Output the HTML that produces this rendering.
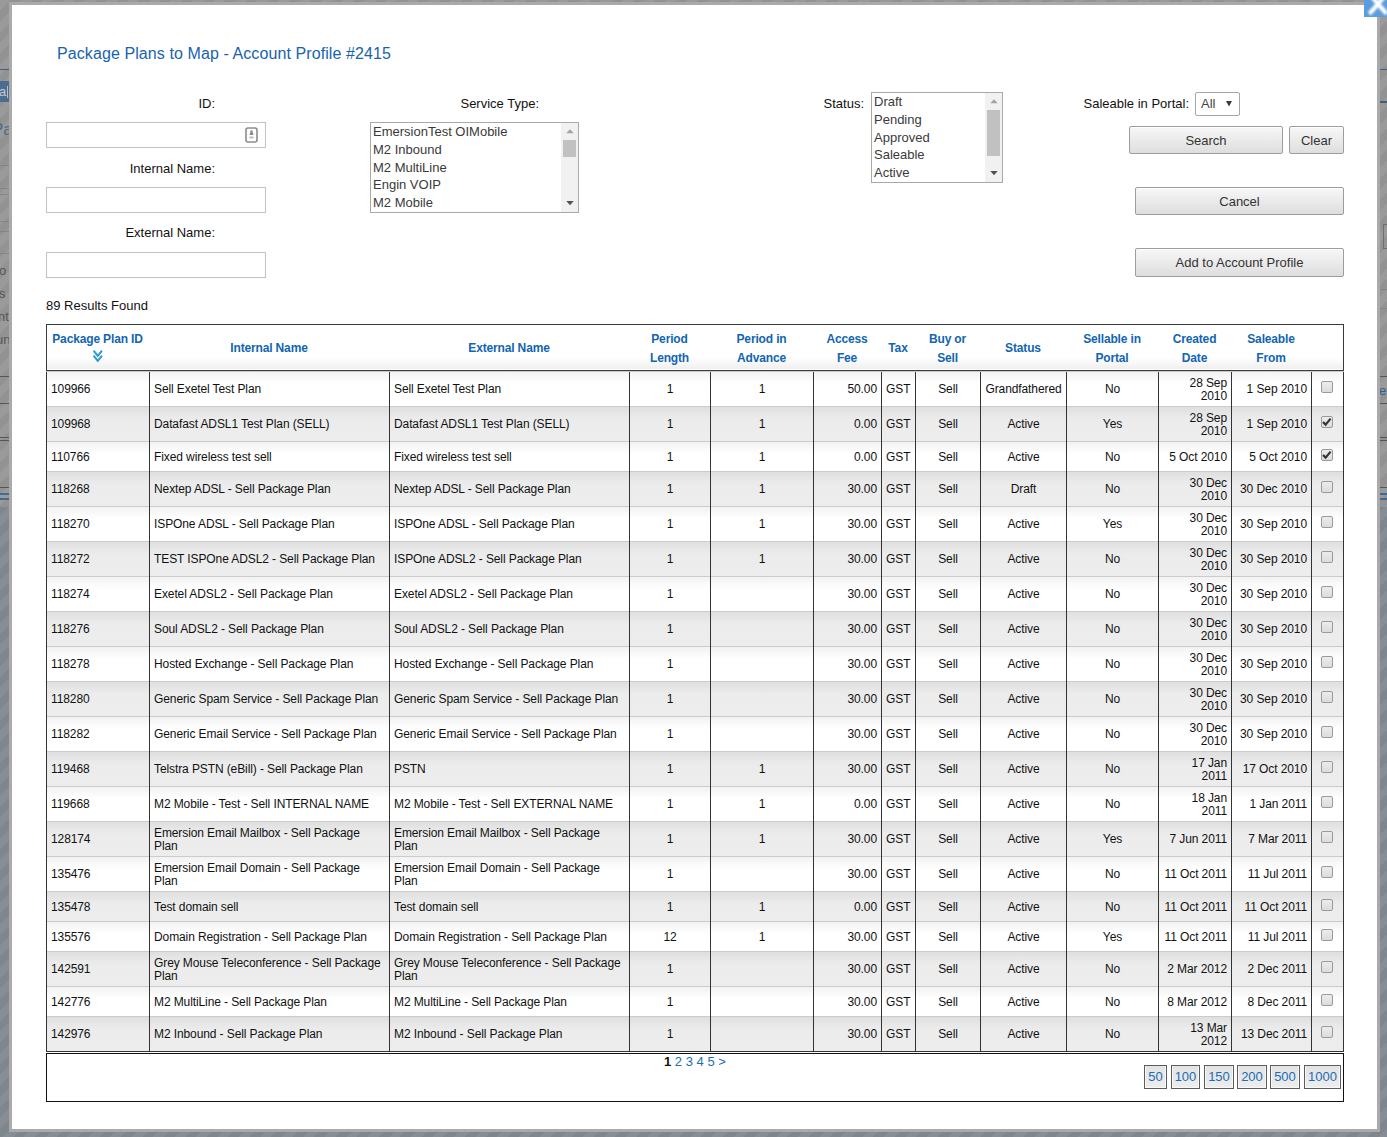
<!DOCTYPE html><html><head><meta charset="utf-8"><title>Package Plans to Map</title><style>
html,body{margin:0;padding:0;}
body{width:1387px;height:1137px;overflow:hidden;position:relative;font-family:"Liberation Sans",sans-serif;
 background:#979797;}
.bg{position:absolute;left:0;top:0;width:1387px;height:1137px;
 background:repeating-linear-gradient(135deg,rgba(255,255,255,0.03) 0 7.6px,rgba(0,0,0,0.03) 7.6px 15.2px);}
.bgb{position:absolute;left:0;top:507px;width:1387px;height:630px;background:#838a92;}
.ln{position:absolute;height:1px;}
.modal{position:absolute;left:9px;top:2px;width:1371px;height:1130px;box-sizing:border-box;border:3px solid #aaaaaa;background:#fff;}
.close{position:absolute;left:1364px;top:0;width:23px;height:17px;background:#5a9cdc;overflow:hidden;}
.abs{position:absolute;white-space:nowrap;}
.title{position:absolute;left:57px;top:45px;letter-spacing:0.09px;font-size:16px;line-height:18px;color:#1763ae;white-space:nowrap;}
.lbl{position:absolute;font-size:13px;line-height:15px;color:#111;white-space:nowrap;text-align:right;}
.inp{position:absolute;box-sizing:border-box;border:1px solid #c2c2c2;background:#fff;}
.lb{position:absolute;box-sizing:border-box;border:1px solid #a9a9a9;background:#fff;overflow:hidden;}
.lb .opts{position:absolute;left:2px;font-size:13px;line-height:17.75px;color:#3a3a3a;white-space:nowrap;}
.sb{position:absolute;right:0;top:0;bottom:0;width:17px;background:#f1f1f1;}
.sb .th{position:absolute;left:2px;width:13px;background:#c1c1c1;}
.btn{position:absolute;box-sizing:border-box;border:1px solid #9d9d9d;border-radius:2px;
 background:linear-gradient(#f7f7f7,#dedede);box-shadow:inset 0 1px 0 #fff;font-size:13px;color:#333;
 text-align:center;white-space:nowrap;}
.sel{position:absolute;box-sizing:border-box;border:1px solid #a6a6a6;border-radius:2px;background:#fff;font-size:13px;color:#333;}
.thead{position:absolute;left:46px;top:324px;width:1298px;height:47px;box-sizing:border-box;border:1px solid #3a3a3a;
 background:linear-gradient(#fff 0,#fff 72%,#eeeeee 100%);box-shadow:inset 0 -1px 0 #fff;}
.th{position:absolute;top:325px;height:45px;font-size:12px;font-weight:bold;color:#1265b2;letter-spacing:-0.15px;text-align:center;white-space:nowrap;}
.th1{line-height:47px;}
.th2{line-height:19px;padding-top:5px;box-sizing:border-box;}
.sorticon{display:inline-block;vertical-align:top;margin-top:1px;}
.row{position:absolute;left:46px;width:1298px;box-sizing:border-box;border-top:1px solid #cbcbcb;}
.row.odd{background:linear-gradient(#f2f2f2 0,#fdfdfd 10px,#fff 13px,#fff 100%);}
.row.even{background:linear-gradient(#dfdfdf 0,#e9e9e9 9px,#ececec 13px,#ededed 100%);}
.td{position:absolute;top:0;bottom:0;display:flex;align-items:center;box-sizing:border-box;font-size:12px;line-height:13px;color:#111;white-space:nowrap;letter-spacing:-0.1px;}
.td.l{justify-content:flex-start;padding-left:5px;}
.td.c{justify-content:center;padding-left:1px;}
.td.r{justify-content:flex-end;padding-right:4px;text-align:right;}
.td span.w{position:relative;top:1px;}
.cb{display:inline-block;width:12px;height:12px;box-sizing:border-box;border:1px solid #9a9a9a;border-radius:2px;background:linear-gradient(#ececec,#dcdcdc);position:relative;left:-1px;top:-2px;}
.cb svg{position:absolute;left:0px;top:0px;}
.vl{position:absolute;top:372px;height:680px;width:1px;background:#333;}
.tbot{position:absolute;left:46px;top:1051px;width:1298px;height:1px;background:#333;}
.pager{position:absolute;left:46px;top:1053px;width:1298px;height:49px;box-sizing:border-box;border:1px solid #111;}
.pg{position:absolute;font-size:13px;line-height:15px;white-space:nowrap;color:#1b6db3;}
.pb{position:absolute;top:1065px;height:24px;box-sizing:border-box;border:1px solid #5c5c5c;background:linear-gradient(#e3e3e3,#ededed);box-shadow:inset 1px -1px 0 #f8f8f8,inset -1px 0 0 #f8f8f8;
 font-size:13px;line-height:22px;color:#1b6db3;text-align:center;}

</style></head><body>
<div class="bgb"></div>
<div class="bg"></div>
<!-- background page hints -->
<div class="ln" style="left:0;top:69px;width:9px;background:#3d5f86"></div>
<div class="abs" style="left:0;top:81px;width:9px;height:21px;background:#4b6b8f;overflow:hidden"><span style="position:absolute;left:-1px;top:3px;font-size:13px;line-height:15px;color:#c4cdd8">a</span><span style="position:absolute;left:7px;top:5px;width:1px;height:12px;background:#b4c0cc"></span></div>
<div class="abs" style="left:0;top:112px;width:9px;height:24px;overflow:hidden"><span style="position:absolute;left:-8px;top:8px;font-size:17px;line-height:19px;color:#4c6a8a">Pa</span></div>
<div class="ln" style="left:0;top:165px;width:9px;background:#858585"></div>
<div class="ln" style="left:0;top:188px;width:9px;background:#858585"></div>
<div class="ln" style="left:0;top:194px;width:9px;background:#858585"></div>
<div class="ln" style="left:0;top:221px;width:9px;background:#858585"></div>
<div class="ln" style="left:0;top:231px;width:9px;background:#858585"></div>
<div class="ln" style="left:0;top:253px;width:9px;background:#858585"></div>
<div class="abs" style="left:0;top:259px;width:9px;height:95px;overflow:hidden;font-size:13px;line-height:23px;color:#555"><div style="position:absolute;left:-1px;top:0">o</div><div style="position:absolute;left:-1px;top:23px">s</div><div style="position:absolute;left:-2px;top:46px">nt</div><div style="position:absolute;left:-4px;top:69px">un</div></div>
<div class="ln" style="left:0;top:376px;width:9px;background:#555"></div>
<div class="ln" style="left:0;top:403px;width:9px;background:#555"></div>
<div class="ln" style="left:0;top:437px;width:9px;background:#555"></div>
<div class="ln" style="left:0;top:440px;width:9px;background:#555"></div>
<div class="ln" style="left:0;top:487px;width:9px;background:#555"></div>
<div class="ln" style="left:0;top:493px;width:9px;height:2px;background:#3f6a96"></div>
<div class="ln" style="left:0;top:498px;width:9px;height:2px;background:#3f6a96"></div>

<div class="ln" style="left:1380px;top:69px;width:7px;background:#3d5f86"></div>
<div class="ln" style="left:1380px;top:101px;width:7px;height:2px;background:#3d5f86"></div>
<div class="abs" style="left:1383px;top:224px;width:8px;height:25px;box-sizing:border-box;border:1px solid #6e6e6e;"></div>
<div class="ln" style="left:1380px;top:289px;width:7px;background:#858585"></div>
<div class="ln" style="left:1380px;top:308px;width:7px;background:#858585"></div>
<div class="ln" style="left:1380px;top:376px;width:7px;background:#555"></div>
<div class="abs" style="left:1380px;top:383px;width:7px;height:16px;overflow:hidden"><span style="position:absolute;left:-1px;top:0;font-size:13px;color:#2f5f92">e</span></div>
<div class="ln" style="left:1380px;top:403px;width:7px;background:#555"></div>
<div class="ln" style="left:1380px;top:437px;width:7px;background:#555"></div>
<div class="ln" style="left:1380px;top:440px;width:7px;background:#555"></div>
<div class="ln" style="left:1380px;top:487px;width:7px;background:#555"></div>
<div class="ln" style="left:1380px;top:493px;width:7px;height:2px;background:#3f6a96"></div>
<div class="ln" style="left:1380px;top:498px;width:7px;height:2px;background:#3f6a96"></div>

<div class="modal"></div>
<div class="close"><svg width="23" height="17" viewBox="0 0 23 17"><defs><filter id="xb" x="-50%" y="-50%" width="200%" height="200%"><feGaussianBlur stdDeviation="1.1"/></filter></defs><path d="M4 -8 L14 4 L24 -8 M14 4 L6.5 12.5 M14 4 L21.5 12.5" fill="none" stroke="#fff" stroke-width="4.2" stroke-linecap="round" filter="url(#xb)"/></svg></div>

<div class="title">Package Plans to Map - Account Profile #2415</div>

<div class="lbl" style="right:1172px;top:96px">ID:</div>
<div class="inp" style="left:46px;top:122px;width:220px;height:26px"><svg style="position:absolute;left:198px;top:4px" width="13" height="16" viewBox="0 0 13 16"><rect x="1" y="1" width="11" height="14" rx="2" ry="2" fill="#fff" stroke="#8c8c8c" stroke-width="1.6"/><circle cx="6.5" cy="4.3" r="1.1" fill="#888"/><path d="M5.6 4.5 L7.4 4.5 L8.6 8 L4.4 8 Z" fill="#8a8a8a"/><rect x="4.2" y="9.4" width="4.6" height="2" rx="0.8" fill="#bdbdbd"/></svg></div>
<div class="lbl" style="right:1172px;top:161px">Internal Name:</div>
<div class="inp" style="left:46px;top:187px;width:220px;height:26px"></div>
<div class="lbl" style="right:1172px;top:225px">External Name:</div>
<div class="inp" style="left:46px;top:252px;width:220px;height:26px"></div>

<div class="lbl" style="right:848px;top:96px">Service Type:</div>
<div class="lb" style="left:370px;top:122px;width:209px;height:91px">
 <div class="opts" style="top:0px">EmersionTest OIMobile<br>M2 Inbound<br>M2 MultiLine<br>Engin VOIP<br>M2 Mobile</div>
 <div class="sb"><svg style="position:absolute;left:4.5px;top:6px" width="8" height="5"><path d="M0.3 4.2 L4 0.3 L7.7 4.2Z" fill="#a3a3a3"/></svg><div class="th" style="top:17px;height:17px"></div><svg style="position:absolute;left:4.5px;top:78px" width="8" height="5"><path d="M0.3 0 L4 4.2 L7.7 0Z" fill="#505050"/></svg></div>
</div>

<div class="lbl" style="right:523px;top:96px">Status:</div>
<div class="lb" style="left:871px;top:92px;width:132px;height:91px">
 <div class="opts" style="top:0px">Draft<br>Pending<br>Approved<br>Saleable<br>Active</div>
 <div class="sb"><svg style="position:absolute;left:4.5px;top:6px" width="8" height="5"><path d="M0.3 4.2 L4 0.3 L7.7 4.2Z" fill="#a3a3a3"/></svg><div class="th" style="top:17px;height:46px"></div><svg style="position:absolute;left:4.5px;top:78px" width="8" height="5"><path d="M0.3 0 L4 4.2 L7.7 0Z" fill="#505050"/></svg></div>
</div>

<div class="lbl" style="right:198px;top:96px">Saleable in Portal:</div>
<div class="sel" style="left:1195px;top:92px;width:45px;height:24px"><span style="position:absolute;left:5px;top:3px;line-height:15px;color:#444">All</span><svg style="position:absolute;left:30px;top:8px" width="6" height="6"><path d="M0 0 L6 0 L3 5.6Z" fill="#3a3a3a"/></svg></div>

<div class="btn" style="left:1129px;top:126px;width:154px;height:28px;line-height:26px;padding-top:1px">Search</div>
<div class="btn" style="left:1289px;top:126px;width:55px;height:28px;line-height:26px;padding-top:1px">Clear</div>
<div class="btn" style="left:1135px;top:187px;width:209px;height:28px;line-height:26px;padding-top:1px">Cancel</div>
<div class="btn" style="left:1135px;top:248px;width:209px;height:29px;line-height:27px">Add to Account Profile</div>

<div class="lbl" style="left:46px;top:298px;text-align:left">89 Results Found</div>

<div class="thead"></div>
<div class="th th2" style="left:46px;width:103px">Package Plan ID<br><svg class="sorticon" width="10" height="13" viewBox="0 0 10 13"><defs><linearGradient id="sg" x1="0" y1="0" x2="0" y2="1"><stop offset="0" stop-color="#3cc4ee"/><stop offset="1" stop-color="#0b7fbf"/></linearGradient></defs><path d="M1.2 1.3 L4.8 5.8 L8.4 1.3 M1.2 6.3 L4.8 10.8 L8.4 6.3" fill="none" stroke="#0f86c4" stroke-width="1.9" stroke-linejoin="miter" stroke-linecap="round"/><path d="M1.6 1.6 L4.8 5.5 L8 1.6 M1.6 6.6 L4.8 10.5 L8 6.6" fill="none" stroke="#5ad0f2" stroke-width="0.6" stroke-linecap="round"/></svg></div>
<div class="th th1" style="left:149px;width:240px">Internal Name</div>
<div class="th th1" style="left:389px;width:240px">External Name</div>
<div class="th th2" style="left:629px;width:81px">Period<br>Length</div>
<div class="th th2" style="left:710px;width:103px">Period in<br>Advance</div>
<div class="th th2" style="left:813px;width:68px">Access<br>Fee</div>
<div class="th th1" style="left:881px;width:34px">Tax</div>
<div class="th th2" style="left:915px;width:65px">Buy or<br>Sell</div>
<div class="th th1" style="left:980px;width:86px">Status</div>
<div class="th th2" style="left:1066px;width:92px">Sellable in<br>Portal</div>
<div class="th th2" style="left:1158px;width:73px">Created<br>Date</div>
<div class="th th2" style="left:1231px;width:80px">Saleable<br>From</div>
<div class="row odd" style="top:371px;height:35px">
<div class="td l" style="left:0px;width:103px"><span>109966</span></div>
<div class="td l" style="left:103px;width:240px"><span>Sell Exetel Test Plan</span></div>
<div class="td l" style="left:343px;width:240px"><span>Sell Exetel Test Plan</span></div>
<div class="td c" style="left:583px;width:81px"><span>1</span></div>
<div class="td c" style="left:664px;width:103px"><span>1</span></div>
<div class="td r" style="left:767px;width:68px"><span>50.00</span></div>
<div class="td l" style="left:835px;width:34px"><span>GST</span></div>
<div class="td c" style="left:869px;width:65px"><span>Sell</span></div>
<div class="td c" style="left:934px;width:86px"><span>Grandfathered</span></div>
<div class="td c" style="left:1020px;width:92px"><span>No</span></div>
<div class="td r" style="left:1112px;width:73px"><span class="w">28 Sep<br>2010</span></div>
<div class="td r" style="left:1185px;width:80px"><span>1 Sep 2010</span></div>
<div class="td c" style="left:1265px;width:32px"><span class="cb"></span></div>
</div>
<div class="row even" style="top:406px;height:35px">
<div class="td l" style="left:0px;width:103px"><span>109968</span></div>
<div class="td l" style="left:103px;width:240px"><span>Datafast ADSL1 Test Plan (SELL)</span></div>
<div class="td l" style="left:343px;width:240px"><span>Datafast ADSL1 Test Plan (SELL)</span></div>
<div class="td c" style="left:583px;width:81px"><span>1</span></div>
<div class="td c" style="left:664px;width:103px"><span>1</span></div>
<div class="td r" style="left:767px;width:68px"><span>0.00</span></div>
<div class="td l" style="left:835px;width:34px"><span>GST</span></div>
<div class="td c" style="left:869px;width:65px"><span>Sell</span></div>
<div class="td c" style="left:934px;width:86px"><span>Active</span></div>
<div class="td c" style="left:1020px;width:92px"><span>Yes</span></div>
<div class="td r" style="left:1112px;width:73px"><span class="w">28 Sep<br>2010</span></div>
<div class="td r" style="left:1185px;width:80px"><span>1 Sep 2010</span></div>
<div class="td c" style="left:1265px;width:32px"><span class="cb"><svg width="10" height="10" viewBox="0 0 10 10"><path d="M1 5 L3.6 7.6 L8.6 1.6" fill="none" stroke="#333" stroke-width="2.2"/></svg></span></div>
</div>
<div class="row odd" style="top:441px;height:30px">
<div class="td l" style="left:0px;width:103px"><span class="w">110766</span></div>
<div class="td l" style="left:103px;width:240px"><span class="w">Fixed wireless test sell</span></div>
<div class="td l" style="left:343px;width:240px"><span class="w">Fixed wireless test sell</span></div>
<div class="td c" style="left:583px;width:81px"><span class="w">1</span></div>
<div class="td c" style="left:664px;width:103px"><span class="w">1</span></div>
<div class="td r" style="left:767px;width:68px"><span class="w">0.00</span></div>
<div class="td l" style="left:835px;width:34px"><span class="w">GST</span></div>
<div class="td c" style="left:869px;width:65px"><span class="w">Sell</span></div>
<div class="td c" style="left:934px;width:86px"><span class="w">Active</span></div>
<div class="td c" style="left:1020px;width:92px"><span class="w">No</span></div>
<div class="td r" style="left:1112px;width:73px"><span class="w">5 Oct 2010</span></div>
<div class="td r" style="left:1185px;width:80px"><span class="w">5 Oct 2010</span></div>
<div class="td c" style="left:1265px;width:32px"><span class="cb"><svg width="10" height="10" viewBox="0 0 10 10"><path d="M1 5 L3.6 7.6 L8.6 1.6" fill="none" stroke="#333" stroke-width="2.2"/></svg></span></div>
</div>
<div class="row even" style="top:471px;height:35px">
<div class="td l" style="left:0px;width:103px"><span>118268</span></div>
<div class="td l" style="left:103px;width:240px"><span>Nextep ADSL - Sell Package Plan</span></div>
<div class="td l" style="left:343px;width:240px"><span>Nextep ADSL - Sell Package Plan</span></div>
<div class="td c" style="left:583px;width:81px"><span>1</span></div>
<div class="td c" style="left:664px;width:103px"><span>1</span></div>
<div class="td r" style="left:767px;width:68px"><span>30.00</span></div>
<div class="td l" style="left:835px;width:34px"><span>GST</span></div>
<div class="td c" style="left:869px;width:65px"><span>Sell</span></div>
<div class="td c" style="left:934px;width:86px"><span>Draft</span></div>
<div class="td c" style="left:1020px;width:92px"><span>No</span></div>
<div class="td r" style="left:1112px;width:73px"><span class="w">30 Dec<br>2010</span></div>
<div class="td r" style="left:1185px;width:80px"><span>30 Dec 2010</span></div>
<div class="td c" style="left:1265px;width:32px"><span class="cb"></span></div>
</div>
<div class="row odd" style="top:506px;height:35px">
<div class="td l" style="left:0px;width:103px"><span>118270</span></div>
<div class="td l" style="left:103px;width:240px"><span>ISPOne ADSL - Sell Package Plan</span></div>
<div class="td l" style="left:343px;width:240px"><span>ISPOne ADSL - Sell Package Plan</span></div>
<div class="td c" style="left:583px;width:81px"><span>1</span></div>
<div class="td c" style="left:664px;width:103px"><span>1</span></div>
<div class="td r" style="left:767px;width:68px"><span>30.00</span></div>
<div class="td l" style="left:835px;width:34px"><span>GST</span></div>
<div class="td c" style="left:869px;width:65px"><span>Sell</span></div>
<div class="td c" style="left:934px;width:86px"><span>Active</span></div>
<div class="td c" style="left:1020px;width:92px"><span>Yes</span></div>
<div class="td r" style="left:1112px;width:73px"><span class="w">30 Dec<br>2010</span></div>
<div class="td r" style="left:1185px;width:80px"><span>30 Sep 2010</span></div>
<div class="td c" style="left:1265px;width:32px"><span class="cb"></span></div>
</div>
<div class="row even" style="top:541px;height:35px">
<div class="td l" style="left:0px;width:103px"><span>118272</span></div>
<div class="td l" style="left:103px;width:240px"><span>TEST ISPOne ADSL2 - Sell Package Plan</span></div>
<div class="td l" style="left:343px;width:240px"><span>ISPOne ADSL2 - Sell Package Plan</span></div>
<div class="td c" style="left:583px;width:81px"><span>1</span></div>
<div class="td c" style="left:664px;width:103px"><span>1</span></div>
<div class="td r" style="left:767px;width:68px"><span>30.00</span></div>
<div class="td l" style="left:835px;width:34px"><span>GST</span></div>
<div class="td c" style="left:869px;width:65px"><span>Sell</span></div>
<div class="td c" style="left:934px;width:86px"><span>Active</span></div>
<div class="td c" style="left:1020px;width:92px"><span>No</span></div>
<div class="td r" style="left:1112px;width:73px"><span class="w">30 Dec<br>2010</span></div>
<div class="td r" style="left:1185px;width:80px"><span>30 Sep 2010</span></div>
<div class="td c" style="left:1265px;width:32px"><span class="cb"></span></div>
</div>
<div class="row odd" style="top:576px;height:35px">
<div class="td l" style="left:0px;width:103px"><span>118274</span></div>
<div class="td l" style="left:103px;width:240px"><span>Exetel ADSL2 - Sell Package Plan</span></div>
<div class="td l" style="left:343px;width:240px"><span>Exetel ADSL2 - Sell Package Plan</span></div>
<div class="td c" style="left:583px;width:81px"><span>1</span></div>
<div class="td r" style="left:767px;width:68px"><span>30.00</span></div>
<div class="td l" style="left:835px;width:34px"><span>GST</span></div>
<div class="td c" style="left:869px;width:65px"><span>Sell</span></div>
<div class="td c" style="left:934px;width:86px"><span>Active</span></div>
<div class="td c" style="left:1020px;width:92px"><span>No</span></div>
<div class="td r" style="left:1112px;width:73px"><span class="w">30 Dec<br>2010</span></div>
<div class="td r" style="left:1185px;width:80px"><span>30 Sep 2010</span></div>
<div class="td c" style="left:1265px;width:32px"><span class="cb"></span></div>
</div>
<div class="row even" style="top:611px;height:35px">
<div class="td l" style="left:0px;width:103px"><span>118276</span></div>
<div class="td l" style="left:103px;width:240px"><span>Soul ADSL2 - Sell Package Plan</span></div>
<div class="td l" style="left:343px;width:240px"><span>Soul ADSL2 - Sell Package Plan</span></div>
<div class="td c" style="left:583px;width:81px"><span>1</span></div>
<div class="td r" style="left:767px;width:68px"><span>30.00</span></div>
<div class="td l" style="left:835px;width:34px"><span>GST</span></div>
<div class="td c" style="left:869px;width:65px"><span>Sell</span></div>
<div class="td c" style="left:934px;width:86px"><span>Active</span></div>
<div class="td c" style="left:1020px;width:92px"><span>No</span></div>
<div class="td r" style="left:1112px;width:73px"><span class="w">30 Dec<br>2010</span></div>
<div class="td r" style="left:1185px;width:80px"><span>30 Sep 2010</span></div>
<div class="td c" style="left:1265px;width:32px"><span class="cb"></span></div>
</div>
<div class="row odd" style="top:646px;height:35px">
<div class="td l" style="left:0px;width:103px"><span>118278</span></div>
<div class="td l" style="left:103px;width:240px"><span>Hosted Exchange - Sell Package Plan</span></div>
<div class="td l" style="left:343px;width:240px"><span>Hosted Exchange - Sell Package Plan</span></div>
<div class="td c" style="left:583px;width:81px"><span>1</span></div>
<div class="td r" style="left:767px;width:68px"><span>30.00</span></div>
<div class="td l" style="left:835px;width:34px"><span>GST</span></div>
<div class="td c" style="left:869px;width:65px"><span>Sell</span></div>
<div class="td c" style="left:934px;width:86px"><span>Active</span></div>
<div class="td c" style="left:1020px;width:92px"><span>No</span></div>
<div class="td r" style="left:1112px;width:73px"><span class="w">30 Dec<br>2010</span></div>
<div class="td r" style="left:1185px;width:80px"><span>30 Sep 2010</span></div>
<div class="td c" style="left:1265px;width:32px"><span class="cb"></span></div>
</div>
<div class="row even" style="top:681px;height:35px">
<div class="td l" style="left:0px;width:103px"><span>118280</span></div>
<div class="td l" style="left:103px;width:240px"><span>Generic Spam Service - Sell Package Plan</span></div>
<div class="td l" style="left:343px;width:240px"><span>Generic Spam Service - Sell Package Plan</span></div>
<div class="td c" style="left:583px;width:81px"><span>1</span></div>
<div class="td r" style="left:767px;width:68px"><span>30.00</span></div>
<div class="td l" style="left:835px;width:34px"><span>GST</span></div>
<div class="td c" style="left:869px;width:65px"><span>Sell</span></div>
<div class="td c" style="left:934px;width:86px"><span>Active</span></div>
<div class="td c" style="left:1020px;width:92px"><span>No</span></div>
<div class="td r" style="left:1112px;width:73px"><span class="w">30 Dec<br>2010</span></div>
<div class="td r" style="left:1185px;width:80px"><span>30 Sep 2010</span></div>
<div class="td c" style="left:1265px;width:32px"><span class="cb"></span></div>
</div>
<div class="row odd" style="top:716px;height:35px">
<div class="td l" style="left:0px;width:103px"><span>118282</span></div>
<div class="td l" style="left:103px;width:240px"><span>Generic Email Service - Sell Package Plan</span></div>
<div class="td l" style="left:343px;width:240px"><span>Generic Email Service - Sell Package Plan</span></div>
<div class="td c" style="left:583px;width:81px"><span>1</span></div>
<div class="td r" style="left:767px;width:68px"><span>30.00</span></div>
<div class="td l" style="left:835px;width:34px"><span>GST</span></div>
<div class="td c" style="left:869px;width:65px"><span>Sell</span></div>
<div class="td c" style="left:934px;width:86px"><span>Active</span></div>
<div class="td c" style="left:1020px;width:92px"><span>No</span></div>
<div class="td r" style="left:1112px;width:73px"><span class="w">30 Dec<br>2010</span></div>
<div class="td r" style="left:1185px;width:80px"><span>30 Sep 2010</span></div>
<div class="td c" style="left:1265px;width:32px"><span class="cb"></span></div>
</div>
<div class="row even" style="top:751px;height:35px">
<div class="td l" style="left:0px;width:103px"><span>119468</span></div>
<div class="td l" style="left:103px;width:240px"><span>Telstra PSTN (eBill) - Sell Package Plan</span></div>
<div class="td l" style="left:343px;width:240px"><span>PSTN</span></div>
<div class="td c" style="left:583px;width:81px"><span>1</span></div>
<div class="td c" style="left:664px;width:103px"><span>1</span></div>
<div class="td r" style="left:767px;width:68px"><span>30.00</span></div>
<div class="td l" style="left:835px;width:34px"><span>GST</span></div>
<div class="td c" style="left:869px;width:65px"><span>Sell</span></div>
<div class="td c" style="left:934px;width:86px"><span>Active</span></div>
<div class="td c" style="left:1020px;width:92px"><span>No</span></div>
<div class="td r" style="left:1112px;width:73px"><span class="w">17 Jan<br>2011</span></div>
<div class="td r" style="left:1185px;width:80px"><span>17 Oct 2010</span></div>
<div class="td c" style="left:1265px;width:32px"><span class="cb"></span></div>
</div>
<div class="row odd" style="top:786px;height:35px">
<div class="td l" style="left:0px;width:103px"><span>119668</span></div>
<div class="td l" style="left:103px;width:240px"><span>M2 Mobile - Test - Sell INTERNAL NAME</span></div>
<div class="td l" style="left:343px;width:240px"><span>M2 Mobile - Test - Sell EXTERNAL NAME</span></div>
<div class="td c" style="left:583px;width:81px"><span>1</span></div>
<div class="td c" style="left:664px;width:103px"><span>1</span></div>
<div class="td r" style="left:767px;width:68px"><span>0.00</span></div>
<div class="td l" style="left:835px;width:34px"><span>GST</span></div>
<div class="td c" style="left:869px;width:65px"><span>Sell</span></div>
<div class="td c" style="left:934px;width:86px"><span>Active</span></div>
<div class="td c" style="left:1020px;width:92px"><span>No</span></div>
<div class="td r" style="left:1112px;width:73px"><span class="w">18 Jan<br>2011</span></div>
<div class="td r" style="left:1185px;width:80px"><span>1 Jan 2011</span></div>
<div class="td c" style="left:1265px;width:32px"><span class="cb"></span></div>
</div>
<div class="row even" style="top:821px;height:35px">
<div class="td l" style="left:0px;width:103px"><span>128174</span></div>
<div class="td l" style="left:103px;width:240px"><span class="w">Emersion Email Mailbox - Sell Package<br>Plan</span></div>
<div class="td l" style="left:343px;width:240px"><span class="w">Emersion Email Mailbox - Sell Package<br>Plan</span></div>
<div class="td c" style="left:583px;width:81px"><span>1</span></div>
<div class="td c" style="left:664px;width:103px"><span>1</span></div>
<div class="td r" style="left:767px;width:68px"><span>30.00</span></div>
<div class="td l" style="left:835px;width:34px"><span>GST</span></div>
<div class="td c" style="left:869px;width:65px"><span>Sell</span></div>
<div class="td c" style="left:934px;width:86px"><span>Active</span></div>
<div class="td c" style="left:1020px;width:92px"><span>Yes</span></div>
<div class="td r" style="left:1112px;width:73px"><span>7 Jun 2011</span></div>
<div class="td r" style="left:1185px;width:80px"><span>7 Mar 2011</span></div>
<div class="td c" style="left:1265px;width:32px"><span class="cb"></span></div>
</div>
<div class="row odd" style="top:856px;height:35px">
<div class="td l" style="left:0px;width:103px"><span>135476</span></div>
<div class="td l" style="left:103px;width:240px"><span class="w">Emersion Email Domain - Sell Package<br>Plan</span></div>
<div class="td l" style="left:343px;width:240px"><span class="w">Emersion Email Domain - Sell Package<br>Plan</span></div>
<div class="td c" style="left:583px;width:81px"><span>1</span></div>
<div class="td r" style="left:767px;width:68px"><span>30.00</span></div>
<div class="td l" style="left:835px;width:34px"><span>GST</span></div>
<div class="td c" style="left:869px;width:65px"><span>Sell</span></div>
<div class="td c" style="left:934px;width:86px"><span>Active</span></div>
<div class="td c" style="left:1020px;width:92px"><span>No</span></div>
<div class="td r" style="left:1112px;width:73px"><span>11 Oct 2011</span></div>
<div class="td r" style="left:1185px;width:80px"><span>11 Jul 2011</span></div>
<div class="td c" style="left:1265px;width:32px"><span class="cb"></span></div>
</div>
<div class="row even" style="top:891px;height:30px">
<div class="td l" style="left:0px;width:103px"><span class="w">135478</span></div>
<div class="td l" style="left:103px;width:240px"><span class="w">Test domain sell</span></div>
<div class="td l" style="left:343px;width:240px"><span class="w">Test domain sell</span></div>
<div class="td c" style="left:583px;width:81px"><span class="w">1</span></div>
<div class="td c" style="left:664px;width:103px"><span class="w">1</span></div>
<div class="td r" style="left:767px;width:68px"><span class="w">0.00</span></div>
<div class="td l" style="left:835px;width:34px"><span class="w">GST</span></div>
<div class="td c" style="left:869px;width:65px"><span class="w">Sell</span></div>
<div class="td c" style="left:934px;width:86px"><span class="w">Active</span></div>
<div class="td c" style="left:1020px;width:92px"><span class="w">No</span></div>
<div class="td r" style="left:1112px;width:73px"><span class="w">11 Oct 2011</span></div>
<div class="td r" style="left:1185px;width:80px"><span class="w">11 Oct 2011</span></div>
<div class="td c" style="left:1265px;width:32px"><span class="cb"></span></div>
</div>
<div class="row odd" style="top:921px;height:30px">
<div class="td l" style="left:0px;width:103px"><span class="w">135576</span></div>
<div class="td l" style="left:103px;width:240px"><span class="w">Domain Registration - Sell Package Plan</span></div>
<div class="td l" style="left:343px;width:240px"><span class="w">Domain Registration - Sell Package Plan</span></div>
<div class="td c" style="left:583px;width:81px"><span class="w">12</span></div>
<div class="td c" style="left:664px;width:103px"><span class="w">1</span></div>
<div class="td r" style="left:767px;width:68px"><span class="w">30.00</span></div>
<div class="td l" style="left:835px;width:34px"><span class="w">GST</span></div>
<div class="td c" style="left:869px;width:65px"><span class="w">Sell</span></div>
<div class="td c" style="left:934px;width:86px"><span class="w">Active</span></div>
<div class="td c" style="left:1020px;width:92px"><span class="w">Yes</span></div>
<div class="td r" style="left:1112px;width:73px"><span class="w">11 Oct 2011</span></div>
<div class="td r" style="left:1185px;width:80px"><span class="w">11 Jul 2011</span></div>
<div class="td c" style="left:1265px;width:32px"><span class="cb"></span></div>
</div>
<div class="row even" style="top:951px;height:35px">
<div class="td l" style="left:0px;width:103px"><span>142591</span></div>
<div class="td l" style="left:103px;width:240px"><span class="w">Grey Mouse Teleconference - Sell Package<br>Plan</span></div>
<div class="td l" style="left:343px;width:240px"><span class="w">Grey Mouse Teleconference - Sell Package<br>Plan</span></div>
<div class="td c" style="left:583px;width:81px"><span>1</span></div>
<div class="td r" style="left:767px;width:68px"><span>30.00</span></div>
<div class="td l" style="left:835px;width:34px"><span>GST</span></div>
<div class="td c" style="left:869px;width:65px"><span>Sell</span></div>
<div class="td c" style="left:934px;width:86px"><span>Active</span></div>
<div class="td c" style="left:1020px;width:92px"><span>No</span></div>
<div class="td r" style="left:1112px;width:73px"><span>2 Mar 2012</span></div>
<div class="td r" style="left:1185px;width:80px"><span>2 Dec 2011</span></div>
<div class="td c" style="left:1265px;width:32px"><span class="cb"></span></div>
</div>
<div class="row odd" style="top:986px;height:30px">
<div class="td l" style="left:0px;width:103px"><span class="w">142776</span></div>
<div class="td l" style="left:103px;width:240px"><span class="w">M2 MultiLine - Sell Package Plan</span></div>
<div class="td l" style="left:343px;width:240px"><span class="w">M2 MultiLine - Sell Package Plan</span></div>
<div class="td c" style="left:583px;width:81px"><span class="w">1</span></div>
<div class="td r" style="left:767px;width:68px"><span class="w">30.00</span></div>
<div class="td l" style="left:835px;width:34px"><span class="w">GST</span></div>
<div class="td c" style="left:869px;width:65px"><span class="w">Sell</span></div>
<div class="td c" style="left:934px;width:86px"><span class="w">Active</span></div>
<div class="td c" style="left:1020px;width:92px"><span class="w">No</span></div>
<div class="td r" style="left:1112px;width:73px"><span class="w">8 Mar 2012</span></div>
<div class="td r" style="left:1185px;width:80px"><span class="w">8 Dec 2011</span></div>
<div class="td c" style="left:1265px;width:32px"><span class="cb"></span></div>
</div>
<div class="row even" style="top:1016px;height:35px">
<div class="td l" style="left:0px;width:103px"><span>142976</span></div>
<div class="td l" style="left:103px;width:240px"><span>M2 Inbound - Sell Package Plan</span></div>
<div class="td l" style="left:343px;width:240px"><span>M2 Inbound - Sell Package Plan</span></div>
<div class="td c" style="left:583px;width:81px"><span>1</span></div>
<div class="td r" style="left:767px;width:68px"><span>30.00</span></div>
<div class="td l" style="left:835px;width:34px"><span>GST</span></div>
<div class="td c" style="left:869px;width:65px"><span>Sell</span></div>
<div class="td c" style="left:934px;width:86px"><span>Active</span></div>
<div class="td c" style="left:1020px;width:92px"><span>No</span></div>
<div class="td r" style="left:1112px;width:73px"><span class="w">13 Mar<br>2012</span></div>
<div class="td r" style="left:1185px;width:80px"><span>13 Dec 2011</span></div>
<div class="td c" style="left:1265px;width:32px"><span class="cb"></span></div>
</div>
<div class="vl" style="left:46px"></div>
<div class="vl" style="left:149px"></div>
<div class="vl" style="left:389px"></div>
<div class="vl" style="left:629px"></div>
<div class="vl" style="left:710px"></div>
<div class="vl" style="left:813px"></div>
<div class="vl" style="left:881px"></div>
<div class="vl" style="left:915px"></div>
<div class="vl" style="left:980px"></div>
<div class="vl" style="left:1066px"></div>
<div class="vl" style="left:1158px"></div>
<div class="vl" style="left:1231px"></div>
<div class="vl" style="left:1311px"></div>
<div class="vl" style="left:1343px"></div>
<div class="tbot"></div>
<div class="pager"></div>
<div class="pg" style="left:664px;top:1054px"><b style="color:#111">1</b> <span>2</span> <span>3</span> <span>4</span> <span>5</span> <span>&gt;</span></div>
<div class="pb" style="left:1144px;width:23px">50</div>
<div class="pb" style="left:1171px;width:29px">100</div>
<div class="pb" style="left:1204px;width:30px">150</div>
<div class="pb" style="left:1237px;width:30px">200</div>
<div class="pb" style="left:1270px;width:30px">500</div>
<div class="pb" style="left:1304px;width:37px">1000</div>

</body></html>
